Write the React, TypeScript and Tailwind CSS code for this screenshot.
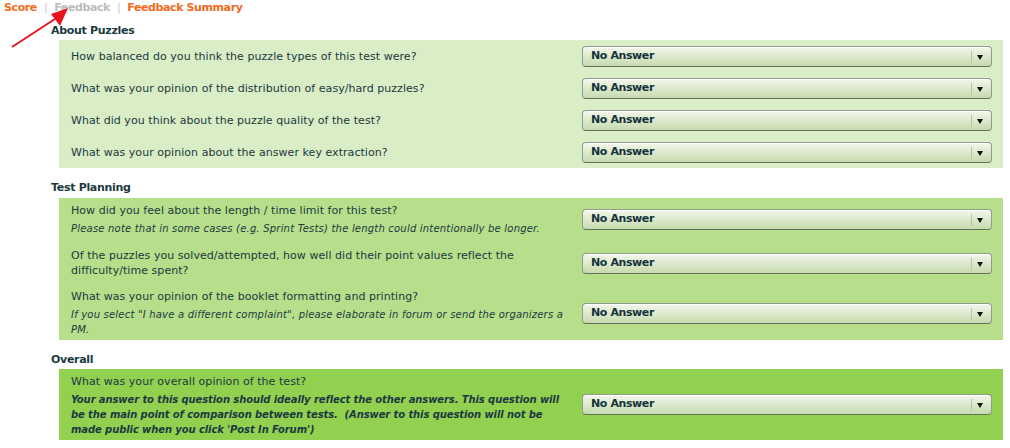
import React from "react";

const font = { fontFamily: '"DejaVu Sans", Verdana, sans-serif' };

function Select() {
  return (
    <div className="relative flex h-[21px] w-[410px] shrink-0 items-center rounded-[4px] border border-[#929c8c] border-b-[#66705f] bg-gradient-to-b from-[#f3f7ec] to-[#c6dbae] pl-[8px] shadow-[inset_0_1px_0_#ffffff]">
      <span className="text-[11px] font-bold tracking-[-0.4px] text-[#15333a]">No Answer</span>
      <div className="absolute right-[19px] top-[4px] h-[12px] w-px bg-[#b8c2b0]" />
      <div className="absolute right-[8px] top-[8px] h-0 w-0 border-x-[3.5px] border-t-[5px] border-x-transparent border-t-[#111]" />
    </div>
  );
}

function Header({ children, top }: { children: React.ReactNode; top: string }) {
  return (
    <div className={`${top} pl-[51px] text-[11px] font-bold leading-[15px] tracking-[-0.3px] text-[#1b3a40]`}>{children}</div>
  );
}

const p1 = [
  "How balanced do you think the puzzle types of this test were?",
  "What was your opinion of the distribution of easy/hard puzzles?",
  "What did you think about the puzzle quality of the test?",
  "What was your opinion about the answer key extraction?",
];

const q = "w-[500px] text-[11px] leading-[15px] tracking-[0.05px]";
const note = "mt-[3px] text-[10px] italic tracking-[0.2px]";

export default function App() {
  return (
    <div className="relative w-[1010px] h-[448px] overflow-hidden bg-white text-[#1b3a40]" style={font}>
      {/* nav */}
      <div className="flex items-center pl-[4px] pt-0 text-[11px] font-bold leading-[15px] tracking-[-0.4px]">
        <span className="text-[#f26a1b]">Score</span>
        <span className="mx-[7px] font-normal text-[#c8c8c8]">|</span>
        <span className="text-[#b9bcbc]">Feedback</span>
        <span className="mx-[7px] font-normal text-[#c8c8c8]">|</span>
        <span className="text-[#f26a1b]">Feedback Summary</span>
      </div>

      <Header top="mt-[8px]">About Puzzles</Header>
      <div className="ml-[59px] mt-[2px] w-[944px] bg-[#d9edc6] pl-[12px] pr-[11px]">
        {p1.map((t) => (
          <div key={t} className="flex h-[32px] items-center justify-between">
            <div className={q}>{t}</div>
            <Select />
          </div>
        ))}
      </div>

      <Header top="mt-[12px]">Test Planning</Header>
      <div className="ml-[59px] mt-[3px] w-[944px] bg-[#b7de8b] pl-[12px] pr-[11px] pt-[5px] pb-[3px]">
        <div className="flex items-center justify-between pb-[6px]">
          <div className={q}>
            <div>How did you feel about the length / time limit for this test?</div>
            <div className={note}>Please note that in some cases (e.g. Sprint Tests) the length could intentionally be longer.</div>
          </div>
          <Select />
        </div>
        <div className="flex items-center justify-between py-[6px]">
          <div className={q}>
            Of the puzzles you solved/attempted, how well did their point values reflect the difficulty/time spent?
          </div>
          <Select />
        </div>
        <div className="flex items-center justify-between pt-[5px]">
          <div className={q}>
            <div>What was your opinion of the booklet formatting and printing?</div>
            <div className={note}>If you select "I have a different complaint", please elaborate in forum or send the organizers a PM.</div>
          </div>
          <Select />
        </div>
      </div>

      <Header top="mt-[12px]">Overall</Header>
      <div className="ml-[59px] mt-[2px] w-[944px] bg-[#92d050] pl-[12px] pr-[11px] pt-[5px] pb-[3px]">
        <div className="flex items-center justify-between">
          <div className={q}>
            <div>What was your overall opinion of the test?</div>
            <div className="mt-[3px] whitespace-nowrap text-[10px] font-bold italic tracking-[-0.1px]">
              <div>Your answer to this question should ideally reflect the other answers. This question will</div>
              <div>be the main point of comparison between tests.&nbsp; (Answer to this question will not be</div>
              <div>made public when you click 'Post In Forum')</div>
            </div>
          </div>
          <div className="-mt-[3px]">
            <Select />
          </div>
        </div>
      </div>

      {/* annotation arrow */}
      <svg className="absolute left-0 top-0" width="90" height="60" viewBox="0 0 90 60">
        <line x1="12" y1="47" x2="58" y2="17" stroke="#e8141b" strokeWidth="2" />
        <polygon points="68,8 51,14 60,26" fill="#e8141b" />
      </svg>
    </div>
  );
}
